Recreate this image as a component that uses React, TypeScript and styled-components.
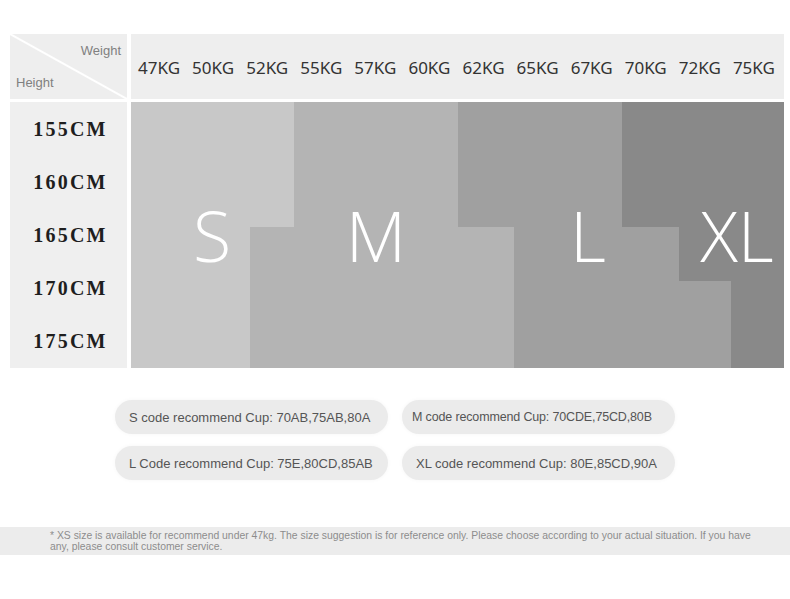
import styled, { createGlobalStyle } from "styled-components";

const weights = ["47KG", "50KG", "52KG", "55KG", "57KG", "60KG", "62KG", "65KG", "67KG", "70KG", "72KG", "75KG"];
const heights = ["155CM", "160CM", "165CM", "170CM", "175CM"];

const cups = [
  { text: "S code recommend Cup: 70AB,75AB,80A" },
  { text: "M code recommend Cup: 70CDE,75CD,80B", tight: true },
  { text: "L Code recommend Cup: 75E,80CD,85AB" },
  { text: "XL code recommend Cup: 80E,85CD,90A" },
];

// stepped areas of the size chart, in chart coordinates (653 x 266)
const areas = [
  { fill: "#c8c8c8", points: "0,0 163,0 163,125 119,125 119,266 0,266" },
  { fill: "#b4b4b4", points: "163,0 327,0 327,125 383,125 383,266 119,266 119,125 163,125" },
  { fill: "#a0a0a0", points: "327,0 491,0 491,125 548,125 548,179 600,179 600,266 383,266 383,125 327,125" },
  { fill: "#898989", points: "491,0 653,0 653,266 600,266 600,179 548,179 548,125 491,125" },
];

const labels = [
  { text: "S", x: 81 },
  { text: "M", x: 245 },
  { text: "L", x: 457 },
  { text: "XL", x: 606 },
];

function App() {
  return (
    <Page>
      <GlobalStyle />
      <Table>
        <Corner>
          <WeightTag>Weight</WeightTag>
          <HeightTag>Height</HeightTag>
        </Corner>
        <WeightRow>
          {weights.map((w) => (
            <WeightCell key={w}>{w}</WeightCell>
          ))}
        </WeightRow>
        <HeightCol>
          {heights.map((h) => (
            <HeightCell key={h}>{h}</HeightCell>
          ))}
        </HeightCol>
        <Chart viewBox="0 0 653 266" width={653} height={266}>
          {areas.map((a) => (
            <polygon key={a.fill} points={a.points} fill={a.fill} />
          ))}
          {labels.map((l) => (
            <SizeLabel key={l.text} x={l.x} y={160} textAnchor="middle">
              {l.text}
            </SizeLabel>
          ))}
        </Chart>
      </Table>

      <Pills>
        {cups.map((c) => (
          <Pill key={c.text} $tight={c.tight}>
            {c.text}
          </Pill>
        ))}
      </Pills>

      <Note>
        * XS size is available for recommend under 47kg. The size suggestion is for reference only. Please choose
        according to your actual situation. If you have any, please consult customer service.
      </Note>
    </Page>
  );
}

export default App;

const GlobalStyle = createGlobalStyle`
  body {
    margin: 0;
    background: #ffffff;
    font-family: "Liberation Sans", Arial, sans-serif;
  }
`;

const Page = styled.div`
  width: 790px;
  height: 599px;
  padding-top: 34px;
  box-sizing: border-box;
  display: flex;
  flex-direction: column;
`;

const Table = styled.div`
  margin-left: 10px;
  display: grid;
  grid-template-columns: 117px 653px;
  grid-template-rows: 65px 266px;
  column-gap: 4px;
  row-gap: 3px;
`;

const Corner = styled.div`
  position: relative;
  background: linear-gradient(
    to top right,
    #eeeeee calc(50% - 1.5px),
    #ffffff calc(50% - 0.5px),
    #ffffff calc(50% + 0.5px),
    #eeeeee calc(50% + 1.5px)
  );
  font-size: 13px;
  color: #808080;
`;

const WeightTag = styled.span`
  position: absolute;
  right: 6px;
  top: 9px;
`;

const HeightTag = styled.span`
  position: absolute;
  left: 6px;
  top: 41px;
`;

const WeightRow = styled.div`
  display: flex;
  align-items: center;
  background: #eeeeee;
  padding: 0 3px 0 1px;
`;

const WeightCell = styled.div`
  flex: 1;
  text-align: center;
  font-family: "Noto Sans", sans-serif;
  font-size: 17px;
  color: #333333;
  padding-top: 1px;
`;

const HeightCol = styled.div`
  display: flex;
  flex-direction: column;
  background: #efefef;
  padding-top: 1px;
`;

const HeightCell = styled.div`
  flex: 1;
  display: flex;
  align-items: center;
  justify-content: center;
  font-family: "Liberation Serif", "DejaVu Serif", serif;
  font-weight: bold;
  font-size: 20px;
  letter-spacing: 2.2px;
  color: #1e1e1e;
  padding-left: 4px;
`;

const Chart = styled.svg`
  display: block;
`;

const SizeLabel = styled.text`
  font-family: "Open Sans", "Noto Sans", sans-serif;
  font-weight: 300;
  font-size: 70px;
  fill: #ffffff;
`;

const Pills = styled.div`
  margin: 32px auto 0;
  display: grid;
  grid-template-columns: 273px 273px;
  column-gap: 14px;
  row-gap: 12px;
`;

const Pill = styled.div<{ $tight?: boolean }>`
  height: 34px;
  border-radius: 17px;
  background: #ebebeb;
  box-shadow: 0 0 4px rgba(0, 0, 0, 0.04);
  display: flex;
  align-items: center;
  padding-left: ${(p) => (p.$tight ? "10px" : "14px")};
  font-size: ${(p) => (p.$tight ? "12.5px" : "13px")};
  letter-spacing: ${(p) => (p.$tight ? "-0.15px" : "0")};
  color: #555555;
  white-space: nowrap;
`;

const Note = styled.div`
  margin-top: 47px;
  height: 28px;
  box-sizing: border-box;
  background: #ececec;
  padding: 3px 30px 0 50px;
  font-size: 10.4px;
  line-height: 11px;
  color: #8c8c8c;
`;
